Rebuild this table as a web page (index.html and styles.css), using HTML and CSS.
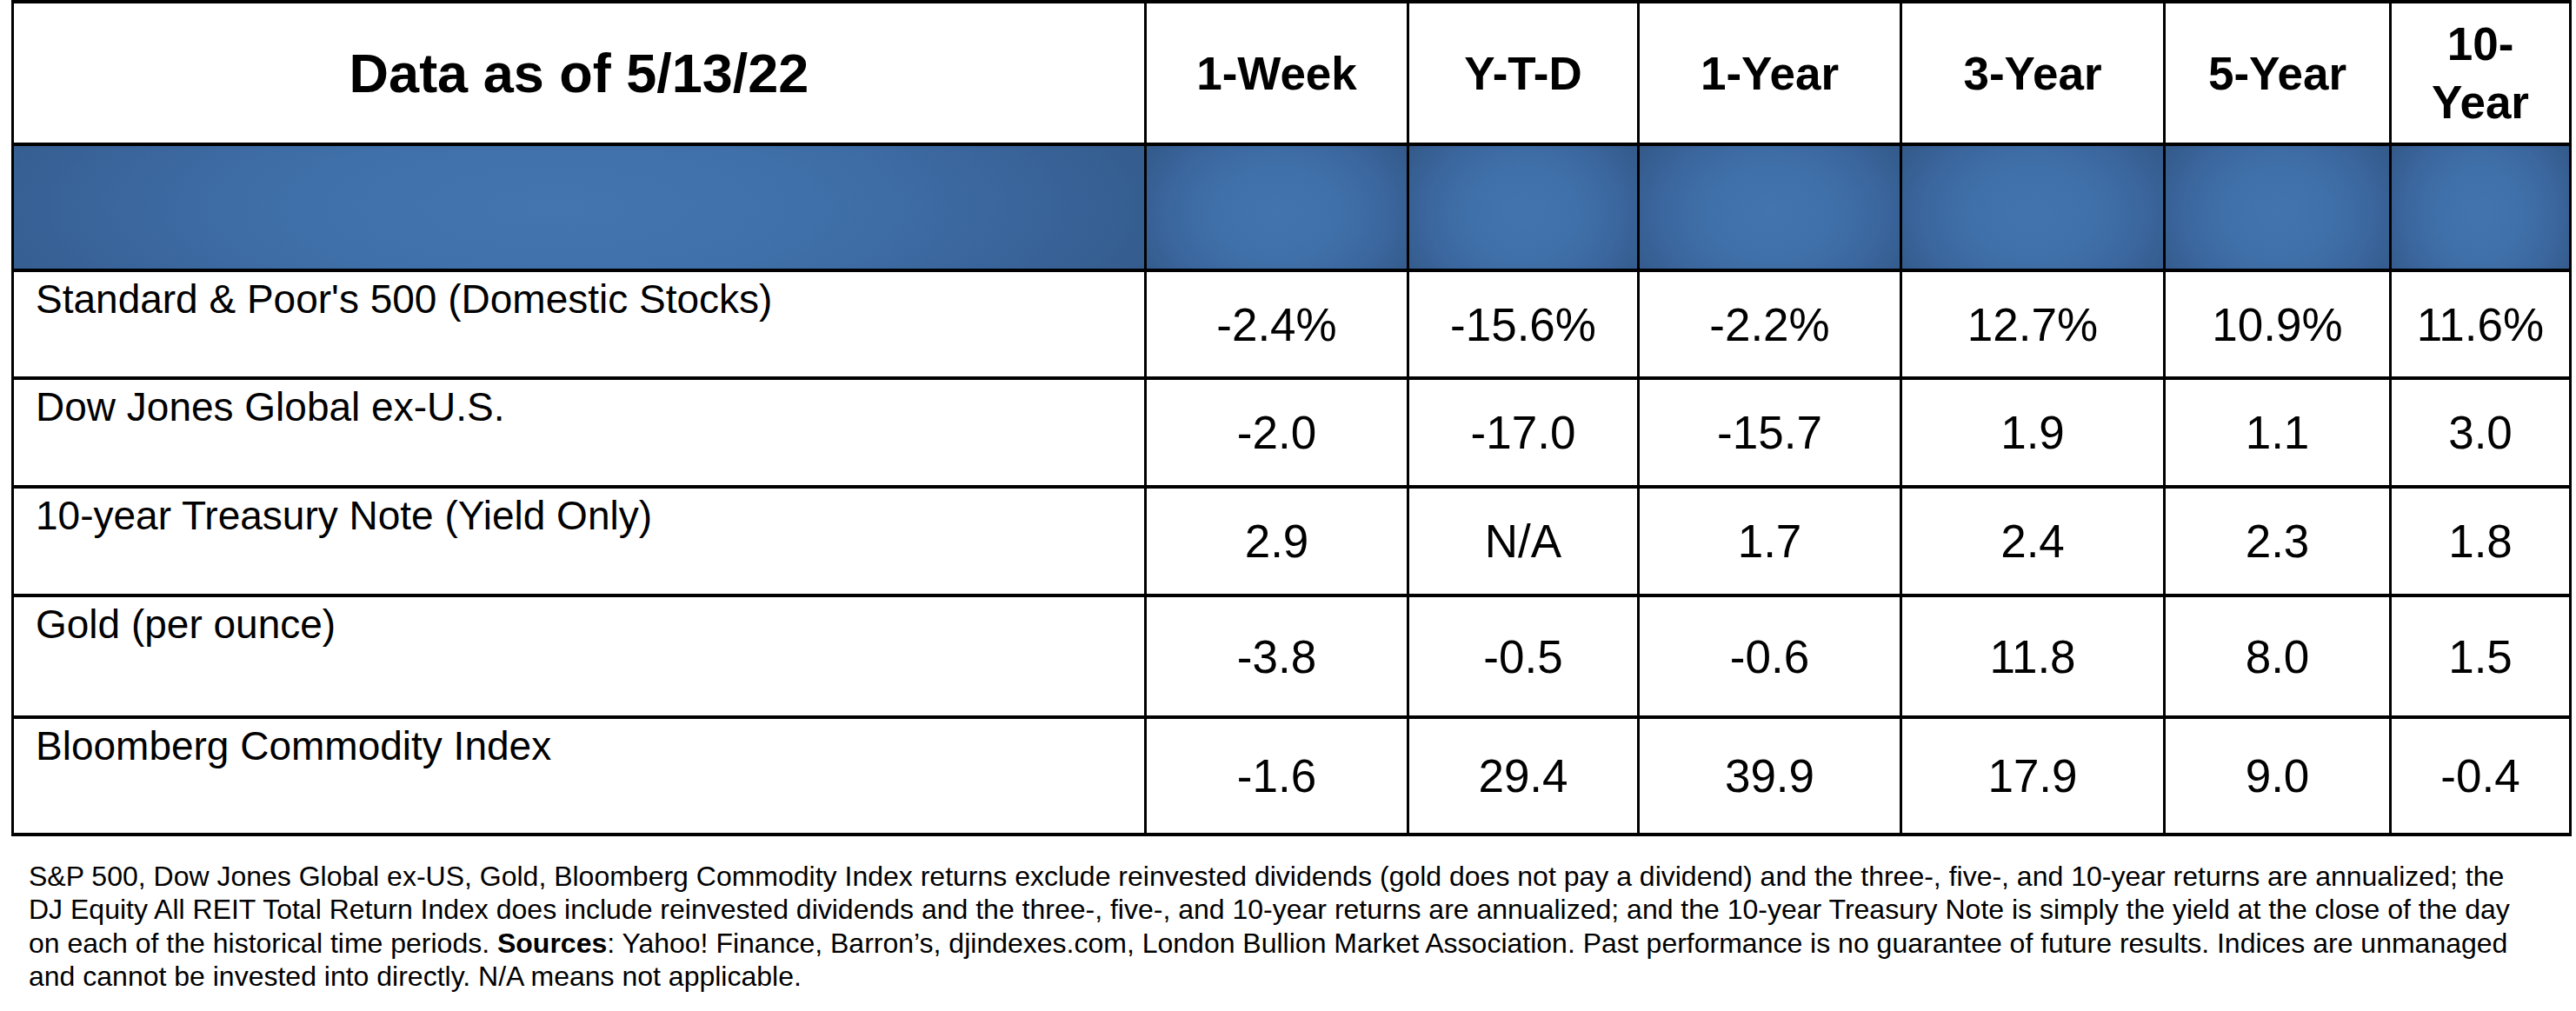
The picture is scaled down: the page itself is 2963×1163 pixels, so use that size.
FILE: index.html
```html
<!DOCTYPE html>
<html lang="en">
<head>
<meta charset="utf-8">
<title>Data as of 5/13/22</title>
<link rel="stylesheet" href="styles.css">
</head>
<body>
<div class="page">
  <div class="grid">
    <div class="cell head title">Data as of 5/13/22</div>
    <div class="cell head">1-Week</div>
    <div class="cell head">Y-T-D</div>
    <div class="cell head">1-Year</div>
    <div class="cell head">3-Year</div>
    <div class="cell head">5-Year</div>
    <div class="cell head">10-Year</div>

    <div class="cell band band-wide"></div>
    <div class="cell band"></div>
    <div class="cell band"></div>
    <div class="cell band"></div>
    <div class="cell band"></div>
    <div class="cell band"></div>
    <div class="cell band"></div>

    <div class="cell label">Standard &amp; Poor's 500 (Domestic Stocks)</div>
    <div class="cell num">-2.4%</div>
    <div class="cell num">-15.6%</div>
    <div class="cell num">-2.2%</div>
    <div class="cell num">12.7%</div>
    <div class="cell num">10.9%</div>
    <div class="cell num">11.6%</div>

    <div class="cell label">Dow Jones Global ex-U.S.</div>
    <div class="cell num">-2.0</div>
    <div class="cell num">-17.0</div>
    <div class="cell num">-15.7</div>
    <div class="cell num">1.9</div>
    <div class="cell num">1.1</div>
    <div class="cell num">3.0</div>

    <div class="cell label">10-year Treasury Note (Yield Only)</div>
    <div class="cell num">2.9</div>
    <div class="cell num">N/A</div>
    <div class="cell num">1.7</div>
    <div class="cell num">2.4</div>
    <div class="cell num">2.3</div>
    <div class="cell num">1.8</div>

    <div class="cell label">Gold (per ounce)</div>
    <div class="cell num">-3.8</div>
    <div class="cell num">-0.5</div>
    <div class="cell num">-0.6</div>
    <div class="cell num">11.8</div>
    <div class="cell num">8.0</div>
    <div class="cell num">1.5</div>

    <div class="cell label">Bloomberg Commodity Index</div>
    <div class="cell num">-1.6</div>
    <div class="cell num">29.4</div>
    <div class="cell num">39.9</div>
    <div class="cell num">17.9</div>
    <div class="cell num">9.0</div>
    <div class="cell num">-0.4</div>
  </div>

  <p class="note">S&amp;P 500, Dow Jones Global ex-US, Gold, Bloomberg Commodity Index returns exclude reinvested dividends (gold does not pay a dividend) and the three-, five-, and 10-year returns are annualized; the DJ Equity All REIT Total Return Index does include reinvested dividends and the three-, five-, and 10-year returns are annualized; and the 10-year Treasury Note is simply the yield at the close of the day on each of the historical time periods. <b>Sources</b>: Yahoo! Finance, Barron’s, djindexes.com, London Bullion Market Association. Past performance is no guarantee of future results. Indices are unmanaged and cannot be invested into directly. N/A means not applicable.</p>
</div>
</body>
</html>
```

FILE: styles.css
```css
html, body {
  margin: 0;
  padding: 0;
  background: #ffffff;
}

body {
  font-family: "Liberation Sans", Arial, sans-serif;
  color: #000000;
}

.page {
  width: 2963px;
  padding: 0 0 0 13px;
  box-sizing: border-box;
}

.grid {
  display: grid;
  width: max-content;
  grid-template-columns: 1300px 299px 262px 299px 300px 257px 204px;
  grid-template-rows: 160px 141px 120px 121px 121px 136px 131px;
  gap: 4px 3px;
  padding: 4px 3px;
  background: #000000;
}

.cell {
  background: #ffffff;
  box-sizing: border-box;
}

.head {
  display: flex;
  align-items: center;
  justify-content: center;
  text-align: center;
  font-weight: bold;
  font-size: 53px;
  line-height: 67px;
  padding: 0 12px;
}

.title {
  font-size: 63px;
}

.band {
  background: radial-gradient(ellipse 60% 95% at 50% 55%, #4474ae 0%, #4070a9 40%, #3b669e 70%, #335a8a 100%);
}

.band-wide {
  background: radial-gradient(ellipse 58% 160% at 48% 50%, #4475af 0%, #4070a9 40%, #3a659c 70%, #335a8a 100%);
}

.label {
  font-size: 46px;
  padding: 5px 0 0 25px;
  line-height: 1.15;
}

.num {
  display: flex;
  align-items: center;
  justify-content: center;
  font-size: 53px;
}

.note {
  margin: 27px 0 0 20px;
  width: 2888px;
  font-size: 32px;
  line-height: 38.3px;
}
```
